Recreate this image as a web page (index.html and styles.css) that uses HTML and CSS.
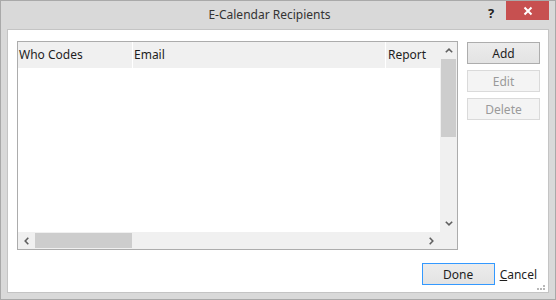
FILE: index.html
```html
<!DOCTYPE html>
<html lang="en">
<head>
  <meta charset="UTF-8">
  <title>E-Calendar Recipients</title>
  <link rel="stylesheet" href="styles.css">
</head>
<body>
  <div class="window">
    <div class="titlebar">
      <div class="title">E-Calendar Recipients</div>
      <div class="help">?</div>
      <div class="close">
        <svg width="10" height="10" viewBox="0 0 10 10"><path d="M1.5 1.5 L8.5 8.5 M8.5 1.5 L1.5 8.5" stroke="#fff" stroke-width="2"/></svg>
      </div>
    </div>

    <div class="client">
      <div class="main">
        <div class="list">
          <div class="list-content">
            <div class="header">
              <div class="col col-who">Who Codes</div>
              <div class="col col-email">Email</div>
              <div class="col col-report">Report</div>
            </div>
          </div>

          <!-- vertical scrollbar -->
          <div class="vscroll">
            <div class="arrow">
              <svg width="8" height="5" viewBox="0 0 8 5"><polyline points="0.8,4.3 4,1.2 7.2,4.3" fill="none" stroke="#606060" stroke-width="1.6"/></svg>
            </div>
            <div class="vtrack"><div class="vthumb"></div></div>
            <div class="arrow">
              <svg width="8" height="5" viewBox="0 0 8 5"><polyline points="0.8,0.7 4,3.8 7.2,0.7" fill="none" stroke="#606060" stroke-width="1.6"/></svg>
            </div>
          </div>

          <!-- horizontal scrollbar -->
          <div class="hscroll">
            <div class="arrow">
              <svg width="5" height="8" viewBox="0 0 5 8"><polyline points="4.3,0.8 1.2,4 4.3,7.2" fill="none" stroke="#606060" stroke-width="1.6"/></svg>
            </div>
            <div class="htrack"><div class="hthumb"></div></div>
            <div class="arrow">
              <svg width="5" height="8" viewBox="0 0 5 8"><polyline points="0.7,0.8 3.8,4 0.7,7.2" fill="none" stroke="#606060" stroke-width="1.6"/></svg>
            </div>
          </div>
          <div class="corner"></div>
        </div>

        <div class="side-buttons">
          <button class="btn">Add</button>
          <button class="btn" disabled>Edit</button>
          <button class="btn" disabled>Delete</button>
        </div>
      </div>

      <div class="footer">
        <button class="btn btn-default">Done</button>
        <span class="link-btn"><u>C</u>ancel</span>
      </div>

      <div class="grip">
        <span></span><span></span><span></span><span></span>
      </div>
    </div>
  </div>
</body>
</html>
```

FILE: styles.css
```css
body {
  margin: 0;
  font-family: 'Noto Sans', 'Open Sans', sans-serif;
  font-size: 12px;
  color: #1e1e1e;
}
.window {
  width: 556px;
  height: 300px;
  box-sizing: border-box;
  background: #d9d9d9;
  border: 1px solid #a9a9a9;
  display: flex;
  flex-direction: column;
}
.titlebar {
  height: 28px;
  display: flex;
  align-items: flex-start;
}
.title {
  flex: 1;
  text-align: center;
  padding-left: 50px;
  padding-top: 5px;
  font-size: 12px;
  color: #333;
}
.help {
  width: 10px;
  margin-top: 3px;
  margin-right: 8px;
  font-weight: bold;
  font-size: 13px;
  color: #222;
}
.close {
  width: 43px;
  height: 19px;
  margin-right: 6px;
  background: #c75050;
  display: flex;
  align-items: center;
  justify-content: center;
}
.client {
  position: relative;
  flex: 1;
  margin: 0 6px 6px 6px;
  background: #fff;
  border: 1px solid #c4c4c4;
  padding: 11px 0 0 9px;
  display: flex;
  flex-direction: column;
}
.main {
  display: flex;
  gap: 9px;
}
.list {
  width: 441px;
  height: 209px;
  box-sizing: border-box;
  border: 1px solid #acacac;
  display: grid;
  grid-template-columns: 1fr 17px;
  grid-template-rows: 1fr 17px;
}
.list-content {
  overflow: hidden;
}
.header {
  display: flex;
  height: 26px;
  background: #f0f0f0;
}
.col {
  line-height: 26px;
  padding-left: 1px;
  box-sizing: border-box;
  border-right: 1px solid #fff;
  white-space: nowrap;
}
.col-who { width: 115px; }
.col-email { width: 253px; }
.col-report { flex: 1; border-right: none; padding-left: 2px; }

.vscroll {
  background: #f0f0f0;
  display: flex;
  flex-direction: column;
}
.vscroll .arrow {
  height: 17px;
  display: flex;
  align-items: center;
  justify-content: center;
}
.vtrack {
  flex: 1;
}
.vthumb {
  margin: 0 1px;
  height: 78px;
  background: #cdcdcd;
}
.hscroll {
  background: #f0f0f0;
  display: flex;
}
.hscroll .arrow {
  width: 17px;
  display: flex;
  align-items: center;
  justify-content: center;
}
.htrack {
  flex: 1;
  padding: 1px 0;
}
.hthumb {
  width: 97px;
  height: 15px;
  background: #cdcdcd;
}
.corner {
  background: #f0f0f0;
}

.side-buttons {
  display: flex;
  flex-direction: column;
  gap: 6px;
  margin-top: 1px;
}
.btn {
  width: 73px;
  height: 22px;
  padding: 0;
  font-family: inherit;
  font-size: 12px;
  color: #1e1e1e;
  background: linear-gradient(#ececec, #e3e3e3);
  border: 1px solid #adadad;
}
.btn:disabled {
  background: #f4f4f4;
  border-color: #dadada;
  color: #9a9a9a;
}
.btn-default {
  border-color: #3399ff;
}
.footer {
  margin-top: 13px;
  display: flex;
  justify-content: flex-end;
  align-items: center;
  gap: 5px;
  padding-right: 11px;
}
.link-btn {
  color: #1e1e1e;
}
.link-btn u {
  text-decoration-thickness: 1px;
}
.grip {
  position: absolute;
  right: 3px;
  bottom: 2px;
  width: 8px;
  height: 5px;
}
.grip span {
  position: absolute;
  width: 2px;
  height: 2px;
  background: #b8b8b8;
}
.grip span:nth-child(1) { right: 0; top: 0; }
.grip span:nth-child(2) { right: 0; bottom: 0; }
.grip span:nth-child(3) { right: 3px; bottom: 0; }
.grip span:nth-child(4) { right: 6px; bottom: 0; }
```
